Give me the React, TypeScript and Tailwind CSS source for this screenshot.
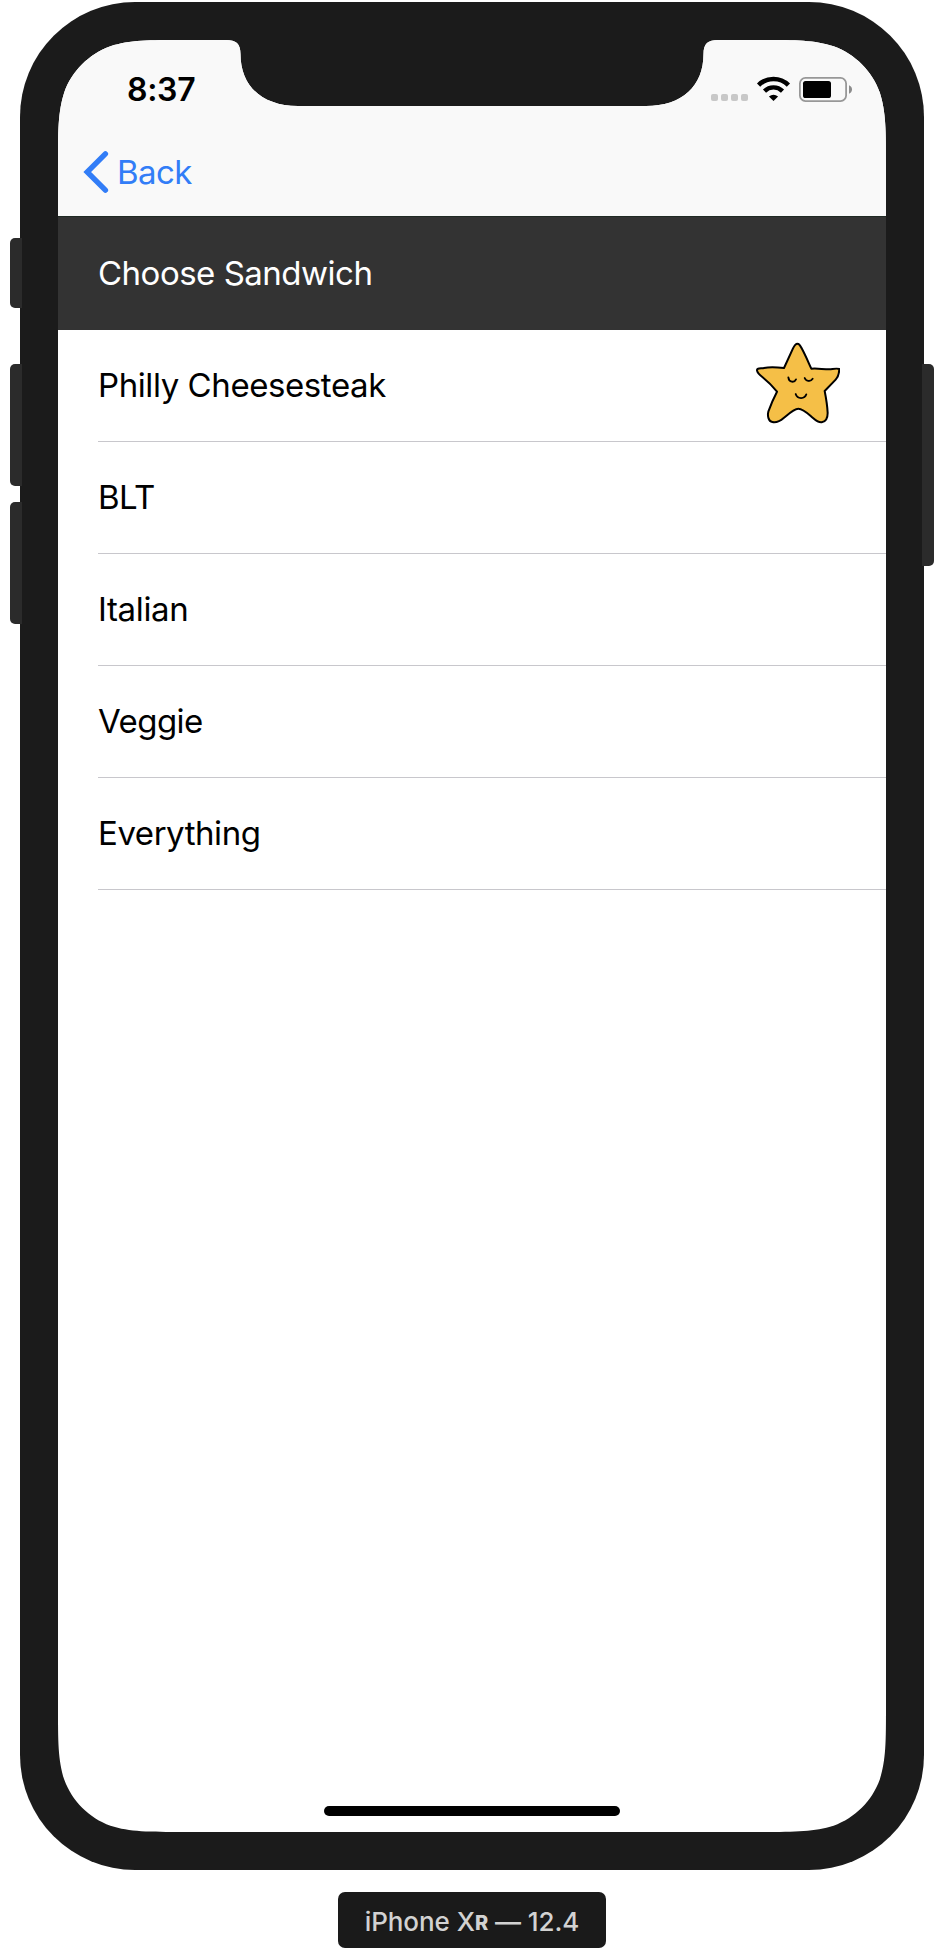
const sandwiches = [
  { name: "Philly Cheesesteak", tracking: "tracking-[-0.42px]", favorite: true },
  { name: "BLT", tracking: "tracking-[-0.5px]", favorite: false },
  { name: "Italian", tracking: "tracking-[-0.35px]", favorite: false },
  { name: "Veggie", tracking: "tracking-[-0.55px]", favorite: false },
  { name: "Everything", tracking: "tracking-[-0.45px]", favorite: false },
];

function StarIcon() {
  return (
    <svg className="mt-3 h-[82px] w-[84px] self-start" viewBox="48 51 252 246" fill="none">
      <path
        d="M172 56C166 56 163 62 159 70L132 129C112 127 92 125 72 129C62 131 50 129 51 136C52 143 58 149 67 156C82 168 99 185 111 200C101 219 92 240 85 260C82 272 85 289 97 291C108 293 122 287 131 279C144 268 162 251 175 251C190 251 205 267 219 279C229 288 237 293 245 292C257 290 263 279 263 264C262 243 258 218 254 198L287 164C297 154 297 144 298 132C290 129 280 132 268 133C248 133 232 129 214 131C206 114 197 92 185 70C181 62 179 56 172 56Z"
        fill="#f5bf47"
        stroke="#000"
        strokeWidth="6"
        strokeLinejoin="round"
      />
      <path
        d="M145 157C147 173 163 174 168 163M194 159C199 171 212 170 218 161M167 207C172 223 194 223 199 208"
        stroke="#000"
        strokeWidth="5.5"
        strokeLinecap="round"
      />
    </svg>
  );
}

function StatusIcons() {
  return (
    <svg className="h-[27px] w-36" viewBox="0 0 144 27" fill="none">
      <g fill="#c8c8c8">
        <rect x="1" y="18" width="7" height="7" rx="2" />
        <rect x="11" y="18" width="7" height="7" rx="2" />
        <rect x="21" y="18" width="7" height="7" rx="2" />
        <rect x="31" y="18" width="7" height="7" rx="2" />
      </g>
      <path d="M48.6 9.1A21.2 21.2 0 0 1 78.4 9.1" stroke="#000" strokeWidth="4.6" />
      <path d="M54.5 15.1A12.8 12.8 0 0 1 72.5 15.1" stroke="#000" strokeWidth="4.4" />
      <path d="M58.9 20.6Q63.5 16.8 68.1 20.6L63.5 25.1Z" fill="#000" />
      <rect x="89.9" y="1.9" width="46.2" height="23.2" rx="5.6" stroke="#989898" strokeWidth="1.8" />
      <rect x="93" y="5" width="28" height="17" rx="2.6" fill="#000" />
      <path d="M139 9.3C141 10 142 11.6 142 13.5C142 15.4 141 17 139 17.7Z" fill="#8c8c8c" />
    </svg>
  );
}

export default function App() {
  return (
    <div className="flex h-[1950px] w-[944px] flex-col items-center overflow-hidden bg-white pt-0.5 font-['Inter',sans-serif]">
      <div className="flex">
        <div className="z-10 -mr-0.5 flex w-3 flex-col">
          <div className="mt-[236px] h-[70px] rounded-l-[5px] bg-[#2b2b2b]" />
          <div className="mt-14 h-[122px] rounded-l-[5px] bg-[#2b2b2b]" />
          <div className="mt-4 h-[122px] rounded-l-[5px] bg-[#2b2b2b]" />
        </div>

        <div className="h-[1868px] w-[904px] rounded-[115px] bg-[#1b1b1b] p-[38px]">
          <div className="flex h-[1792px] w-[828px] flex-col bg-white [clip-path:path('M127,0H168C178,0,182.5,3.5,182.5,14C182.5,46,204,66,240,66H588C624,66,645.5,46,645.5,14C645.5,3.5,650,0,660,0H701C737.7,0,755.9,0,775.6,6.2C797.1,14,814,30.9,821.8,52.4C828,72.1,828,90.3,828,127V1665C828,1701.7,828,1719.9,821.8,1739.6C814,1761.1,797.1,1778,775.6,1785.8C755.9,1792,737.7,1792,701,1792H127C90.3,1792,72.1,1792,52.4,1785.8C30.9,1778,14,1761.1,6.2,1739.6C0,1719.9,0,1701.7,0,1665V127C0,90.3,0,72.1,6.2,52.4C14,30.9,30.9,14,52.4,6.2C72.1,0,90.3,0,127,0Z')]">
            <header className="flex h-[177px] shrink-0 flex-col border-b border-[#1f2a24] bg-[#f9f9f9]">
              <div className="flex h-[88px] items-start justify-between pt-9 pr-8 pl-[69px]">
                <time className="text-[32px] leading-[28px] font-semibold tracking-[-0.3px] text-black">8:37</time>
                <StatusIcons />
              </div>
              <button className="flex h-[88px] items-center self-start pl-[25px] text-[#327df7]">
                <svg className="h-11 w-[26px]" viewBox="0 0 26 44" fill="none">
                  <path d="M22.4 3.8L4.2 22L22.4 40.2" stroke="currentColor" strokeWidth="5.4" strokeLinecap="round" />
                </svg>
                <span className="ml-[8px] text-[33px] leading-none tracking-[-0.6px]">Back</span>
              </button>
            </header>

            <h1 className="flex h-[113px] shrink-0 items-center bg-[#333] pl-10 text-[33px] font-normal tracking-[-0.5px] text-white">
              Choose Sandwich
            </h1>

            <ul className="flex flex-1 flex-col pl-10">
              {sandwiches.map((item) => (
                <li
                  key={item.name}
                  className="flex h-28 items-center justify-between border-b border-[#c8c7cc] pr-[46px] text-[33px] text-black"
                >
                  <span className={item.tracking}>{item.name}</span>
                  {item.favorite && <StarIcon />}
                </li>
              ))}
            </ul>

            <div className="mb-4 h-2.5 w-[296px] shrink-0 self-center rounded-full bg-black" />
          </div>
        </div>

        <div className="z-10 -ml-0.5 flex w-3 flex-col">
          <div className="mt-[362px] h-[202px] rounded-r-[5px] bg-[#2b2b2b]" />
        </div>
      </div>

      <div className="mt-[22px] flex h-14 w-[268px] items-center justify-center rounded-[7px] bg-[#1a1a1a] pt-0.5 text-[26px] font-medium tracking-[-0.05px] whitespace-pre text-[#d2d2d2]">
        <span>iPhone X</span>
        <span className="mt-1 text-[20px] font-extrabold">R</span>
        <span> — 12.4</span>
      </div>
    </div>
  );
}
